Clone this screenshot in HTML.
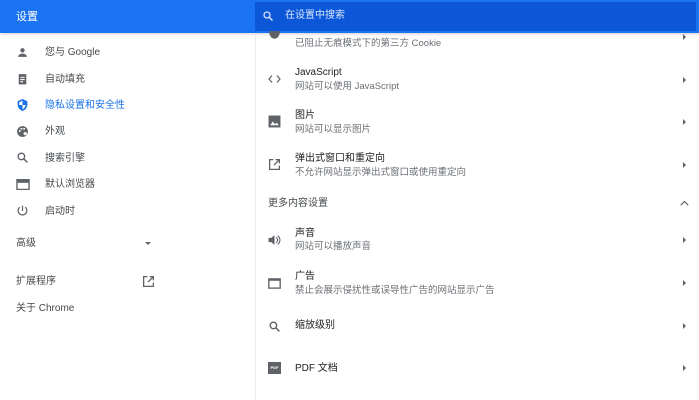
<!DOCTYPE html><html><head><meta charset="utf-8"><style>
body{margin:0;width:699px;height:400px;overflow:hidden;background:#fff;font-family:"Liberation Sans","Noto Sans CJK SC",sans-serif;position:relative;color:#202124}
.hdr{position:absolute;left:0;top:0;width:699px;height:33px;background:#1a73f0;box-shadow:0 1px 3px rgba(0,0,0,.2)}
.srch{position:absolute;left:255px;top:2px;width:441px;height:29px;background:#0b57d8}
.t{position:absolute;font-size:10px;white-space:nowrap;line-height:12px}
.s{color:#6b6f74;font-size:9.5px}
.n{color:#44484c}
.ic{position:absolute}
.arr{position:absolute;left:683px;width:0;height:0;border-top:3px solid transparent;border-bottom:3px solid transparent;border-left:3px solid #5f6368}
.vl{position:absolute;left:255px;top:33px;width:1px;height:367px;background:#e8eaed}
</style></head><body>
<div class="hdr"></div><div class="srch"></div>
<div class="t" style="left:16px;top:11px;color:#fff;font-size:11px">设置</div>
<svg class="ic" style="left:262px;top:10px" width="12" height="12" viewBox="0 0 24 24"><circle cx="10" cy="10" r="6" fill="none" stroke="#dbe6fb" stroke-width="2.5"/><path d="M14.5 14.5L21 21" stroke="#dbe6fb" stroke-width="2.8"/></svg>
<div class="t" style="left:285px;top:10px;color:#dbe6fb">在设置中搜索</div>
<div class="vl"></div>
<!-- left nav -->
<svg class="ic" style="left:16px;top:46px" width="13" height="13" viewBox="0 0 24 24" fill="#5f6368"><circle cx="12" cy="8" r="4"/><path d="M4 20c0-4 4-6 8-6s8 2 8 6z"/></svg>
<div class="t n" style="left:45px;top:47px">您与 Google</div>
<svg class="ic" style="left:16px;top:72px" width="13" height="14" viewBox="0 0 24 24" fill="#5f6368"><path d="M5 3h14v19H5z"/><path d="M8 9h8M8 13h8M8 17h5" stroke="#fff" stroke-width="2"/></svg>
<div class="t n" style="left:45px;top:74px">自动填充</div>
<svg class="ic" style="left:16px;top:98px" width="13" height="14" viewBox="0 0 24 24"><path d="M12 1L3 5v6c0 6 4 10 9 12 5-2 9-6 9-12V5z" fill="#1a73e8"/><path d="M12 4v8h6c-1 4-3 6-6 8V12H6V7z" fill="#fff"/></svg>
<div class="t" style="left:45px;top:100px;color:#1a73e8">隐私设置和安全性</div>
<svg class="ic" style="left:16px;top:125px" width="13" height="13" viewBox="0 0 24 24"><circle cx="12" cy="12" r="10" fill="#5f6368"/><circle cx="7" cy="11" r="1.8" fill="#fff"/><circle cx="10" cy="7" r="1.8" fill="#fff"/><circle cx="15" cy="7" r="1.8" fill="#fff"/><circle cx="17" cy="16" r="3" fill="#fff"/></svg>
<div class="t n" style="left:45px;top:126px">外观</div>
<svg class="ic" style="left:16px;top:151px" width="13" height="13" viewBox="0 0 24 24"><circle cx="10" cy="10" r="6" fill="none" stroke="#5f6368" stroke-width="2.5"/><path d="M14.5 14.5L21 21" stroke="#5f6368" stroke-width="2.8"/></svg>
<div class="t n" style="left:45px;top:153px">搜索引擎</div>
<svg class="ic" style="left:16px;top:179px" width="14" height="11" viewBox="0 0 24 20"><rect x="1" y="1" width="22" height="18" fill="none" stroke="#5f6368" stroke-width="2.5"/><rect x="1" y="1" width="22" height="6" fill="#5f6368"/></svg>
<div class="t n" style="left:45px;top:179px">默认浏览器</div>
<svg class="ic" style="left:16px;top:204px" width="13" height="14" viewBox="0 0 24 24" fill="none" stroke="#5f6368" stroke-width="2.2"><path d="M12 2v10"/><path d="M7 5a8 8 0 1 0 10 0"/></svg>
<div class="t n" style="left:45px;top:206px">启动时</div>
<div class="t n" style="left:16px;top:238px">高级</div>
<div style="position:absolute;left:145px;top:242px;border-left:3px solid transparent;border-right:3px solid transparent;border-top:3px solid #5f6368"></div>
<div class="t n" style="left:16px;top:276px">扩展程序</div>
<svg class="ic" style="left:142px;top:275px" width="13" height="13" viewBox="0 0 24 24" fill="none" stroke="#5f6368" stroke-width="2.4"><path d="M10 3H3v18h18v-7"/><path d="M14 3h7v7M21 3L11 13"/></svg>
<div class="t n" style="left:16px;top:303px">关于 Chrome</div>
<!-- right -->
<svg class="ic" style="left:268px;top:31px" width="13" height="10" viewBox="0 0 24 18"><path d="M2 0h20c0 8-4 14-10 14S2 8 2 0z" fill="#5f6368"/></svg>
<div class="t s" style="left:295px;top:38px">已阻止无痕模式下的第三方 Cookie</div>
<div class="arr" style="top:34px"></div>
<svg class="ic" style="left:268px;top:74px" width="13" height="10" viewBox="0 0 26 20" fill="none" stroke="#5f6368" stroke-width="2.4"><path d="M8 3L2 10l6 7M18 3l6 7-6 7"/></svg>
<div class="t" style="left:295px;top:67px">JavaScript</div>
<div class="t s" style="left:295px;top:81px">网站可以使用 JavaScript</div>
<div class="arr" style="top:77px"></div>
<svg class="ic" style="left:268px;top:115px" width="13" height="13" viewBox="0 0 24 24"><rect x="1" y="1" width="22" height="22" fill="#5f6368"/><path d="M4 19l5-7 4 5 3-3 4 5z" fill="#fff"/></svg>
<div class="t" style="left:295px;top:110px">图片</div>
<div class="t s" style="left:295px;top:124px">网站可以显示图片</div>
<div class="arr" style="top:119px"></div>
<svg class="ic" style="left:268px;top:158px" width="13" height="13" viewBox="0 0 24 24" fill="none" stroke="#5f6368" stroke-width="2.4"><path d="M10 3H3v18h18v-7"/><path d="M14 3h7v7M21 3L11 13"/></svg>
<div class="t" style="left:295px;top:153px">弹出式窗口和重定向</div>
<div class="t s" style="left:295px;top:167px">不允许网站显示弹出式窗口或使用重定向</div>
<div class="arr" style="top:162px"></div>
<div class="t n" style="left:268px;top:198px">更多内容设置</div>
<svg class="ic" style="left:680px;top:200px" width="9" height="6" viewBox="0 0 12 8" fill="none" stroke="#5f6368" stroke-width="1.6"><path d="M1 7l5-5 5 5"/></svg>
<svg class="ic" style="left:268px;top:234px" width="13" height="12" viewBox="0 0 24 22" fill="#5f6368"><path d="M1 7h5l6-5v18l-6-5H1z"/><path d="M15 6a6 6 0 0 1 0 10M18 3a10 10 0 0 1 0 16" fill="none" stroke="#5f6368" stroke-width="2"/></svg>
<div class="t" style="left:295px;top:228px">声音</div>
<div class="t s" style="left:295px;top:241px">网站可以播放声音</div>
<div class="arr" style="top:237px"></div>
<svg class="ic" style="left:268px;top:278px" width="13" height="11" viewBox="0 0 24 20"><rect x="1.5" y="1.5" width="21" height="17" fill="none" stroke="#5f6368" stroke-width="2.5"/><rect x="1" y="1" width="22" height="4" fill="#5f6368"/></svg>
<div class="t" style="left:295px;top:271px">广告</div>
<div class="t s" style="left:295px;top:285px">禁止会展示侵扰性或误导性广告的网站显示广告</div>
<div class="arr" style="top:280px"></div>
<svg class="ic" style="left:268px;top:320px" width="13" height="13" viewBox="0 0 24 24"><circle cx="10" cy="10" r="6" fill="none" stroke="#5f6368" stroke-width="2.5"/><path d="M14.5 14.5L21 21" stroke="#5f6368" stroke-width="2.8"/></svg>
<div class="t" style="left:295px;top:320px">缩放级别</div>
<div class="arr" style="top:323px"></div>
<div class="ic" style="left:268px;top:362px;width:13px;height:12px;background:#5f6368;color:#fff;font-size:4px;line-height:12px;text-align:center;font-weight:bold">PDF</div>
<div class="t" style="left:295px;top:363px">PDF 文档</div>
<div class="arr" style="top:365px"></div>
</body></html>
